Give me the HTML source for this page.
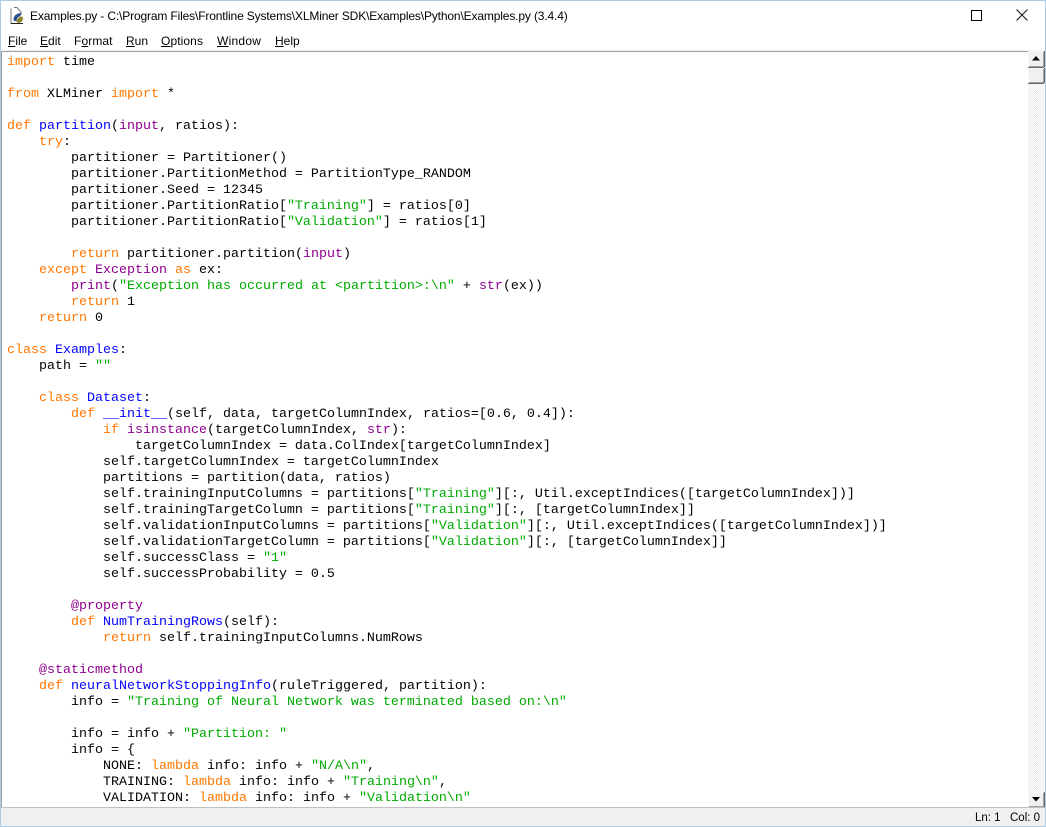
<!DOCTYPE html>
<html><head><meta charset="utf-8"><style>
html,body{margin:0;padding:0;width:1046px;height:827px;overflow:hidden;background:#fff}
.abs{position:absolute}
#win{position:absolute;left:0;top:0;width:1046px;height:827px;overflow:hidden;background:#fff}
#code{position:absolute;left:7px;top:55px;margin:0;font:13.333px/16px "Liberation Mono",monospace;color:#000;white-space:pre;width:1020px;height:752px;overflow:hidden}
.k{color:#ff7700}.b{color:#900090}.s{color:#00aa00}.d{color:#0000ff}
.ui{position:absolute;font:12px/16px "Liberation Sans",sans-serif;color:#000;white-space:pre}
.m{top:33px;font-size:12px}
.m u{text-underline-offset:1px}
.btn{position:absolute;left:1028px;width:15px;background:#f0f0f0;border-top:1px solid #f8f8f8;border-left:1px solid #f8f8f8;box-shadow:inset -1px -1px 0 #a0a0a0,0 1px 0 #696969,1px 0 0 #696969}
</style></head><body><div id="win">
<div class="abs" style="left:0;top:0;width:1046px;height:1px;background:#a9cde9"></div>
<div class="abs" style="left:0;top:0;width:1px;height:827px;background:#a9cde9"></div>
<div class="abs" style="left:1045px;top:0;width:1px;height:827px;background:#a9cde9"></div>
<div class="abs" style="left:0;top:826px;width:1046px;height:1px;background:#a9cde9"></div>

<svg class="abs" style="left:8px;top:6px" width="20" height="20" viewBox="0 0 20 20">
<path d="M3 2.500V17.500H7M6 1.500H9L13 6V9" fill="none" stroke="#777" stroke-width="1"/>
<path d="M3 17.500H15" stroke="#222" stroke-width="1"/>
<path d="M5.500 13C6 9 9 8 12.500 6.800L12.500 10.500C9.500 10.500 9 12.500 8.500 15C6.500 15.500 5.500 14.500 5.500 13Z" fill="#25508f"/>
<path d="M8.500 16C9 12 11 11 14.500 10.500C15.500 13 14.500 16.500 11 16.800C10 16.800 9 16.500 8.500 16Z" fill="#8a8520"/>
</svg>
<div class="ui" style="left:30px;top:8px;font-size:12px;letter-spacing:-0.145px" id="t">Examples.py - C:\Program Files\Frontline Systems\XLMiner SDK\Examples\Python\Examples.py (3.4.4)</div>

<div class="abs" style="left:971px;top:10px;width:9px;height:9px;border:1px solid #000"></div>
<svg class="abs" style="left:1016px;top:9px" width="12" height="12" viewBox="0 0 12 12"><path d="M.5 .5L11.500 11.500M11.500 .5L.5 11.500" stroke="#111" stroke-width="1"/></svg>

<div class="ui m" style="left:8px"><u>F</u>ile</div>
<div class="ui m" style="left:40px"><u>E</u>dit</div>
<div class="ui m" style="left:74px;letter-spacing:.1px">F<u>o</u>rmat</div>
<div class="ui m" style="left:126px"><u>R</u>un</div>
<div class="ui m" style="left:161px;letter-spacing:.1px"><u>O</u>ptions</div>
<div class="ui m" style="left:217px;letter-spacing:.25px"><u>W</u>indow</div>
<div class="ui m" style="left:275px"><u>H</u>elp</div>

<div class="abs" style="left:1px;top:50px;width:1044px;height:1px;background:#f0f0f0"></div>
<div class="abs" style="left:1px;top:51px;width:1027px;height:1px;background:#a0a0a0"></div>
<div class="abs" style="left:1px;top:51px;width:1px;height:757px;background:#a0a0a0"></div>

<pre id="code"><span class="k">import</span> time

<span class="k">from</span> XLMiner <span class="k">import</span> *

<span class="k">def</span> <span class="d">partition</span>(<span class="b">input</span>, ratios):
    <span class="k">try</span>:
        partitioner = Partitioner()
        partitioner.PartitionMethod = PartitionType_RANDOM
        partitioner.Seed = 12345
        partitioner.PartitionRatio[<span class="s">"Training"</span>] = ratios[0]
        partitioner.PartitionRatio[<span class="s">"Validation"</span>] = ratios[1]

        <span class="k">return</span> partitioner.partition(<span class="b">input</span>)
    <span class="k">except</span> <span class="b">Exception</span> <span class="k">as</span> ex:
        <span class="b">print</span>(<span class="s">"Exception has occurred at &lt;partition&gt;:\n"</span> + <span class="b">str</span>(ex))
        <span class="k">return</span> 1
    <span class="k">return</span> 0

<span class="k">class</span> <span class="d">Examples</span>:
    path = <span class="s">""</span>

    <span class="k">class</span> <span class="d">Dataset</span>:
        <span class="k">def</span> <span class="d">__init__</span>(self, data, targetColumnIndex, ratios=[0.6, 0.4]):
            <span class="k">if</span> <span class="b">isinstance</span>(targetColumnIndex, <span class="b">str</span>):
                targetColumnIndex = data.ColIndex[targetColumnIndex]
            self.targetColumnIndex = targetColumnIndex
            partitions = partition(data, ratios)
            self.trainingInputColumns = partitions[<span class="s">"Training"</span>][:, Util.exceptIndices([targetColumnIndex])]
            self.trainingTargetColumn = partitions[<span class="s">"Training"</span>][:, [targetColumnIndex]]
            self.validationInputColumns = partitions[<span class="s">"Validation"</span>][:, Util.exceptIndices([targetColumnIndex])]
            self.validationTargetColumn = partitions[<span class="s">"Validation"</span>][:, [targetColumnIndex]]
            self.successClass = <span class="s">"1"</span>
            self.successProbability = 0.5

        <span class="b">@property</span>
        <span class="k">def</span> <span class="d">NumTrainingRows</span>(self):
            <span class="k">return</span> self.trainingInputColumns.NumRows

    <span class="b">@staticmethod</span>
    <span class="k">def</span> <span class="d">neuralNetworkStoppingInfo</span>(ruleTriggered, partition):
        info = <span class="s">"Training of Neural Network was terminated based on:\n"</span>

        info = info + <span class="s">"Partition: "</span>
        info = {
            NONE: <span class="k">lambda</span> info: info + <span class="s">"N/A\n"</span>,
            TRAINING: <span class="k">lambda</span> info: info + <span class="s">"Training\n"</span>,
            VALIDATION: <span class="k">lambda</span> info: info + <span class="s">"Validation\n"</span></pre>

<div class="abs" style="left:1028px;top:84px;width:16px;height:709px;background-color:#fff;background-image:repeating-conic-gradient(#ececec 0 25%,#fff 0 50%);background-size:2px 2px"></div>
<div class="btn" style="top:51px;height:15px"></div>
<svg class="abs" style="left:1031px;top:55px" width="10" height="7"><path d="M5 1L9 5.500H1Z" fill="#000"/></svg>
<div class="btn" style="top:68px;height:14px"></div>
<div class="btn" style="top:792px;height:14px"></div>
<svg class="abs" style="left:1031px;top:796px" width="10" height="7"><path d="M1 1H9L5 5.500Z" fill="#000"/></svg>

<div class="abs" style="left:1px;top:807px;width:1044px;height:1px;background:#c0c0c0"></div>
<div class="abs" style="left:1px;top:808px;width:1044px;height:18px;background:#f0f0f0"></div>
<div class="ui" style="left:975px;top:810px;font-size:11.500px">Ln: 1</div>
<div class="ui" style="left:1010px;top:810px;font-size:11.500px">Col: 0</div>
</div></body></html>
